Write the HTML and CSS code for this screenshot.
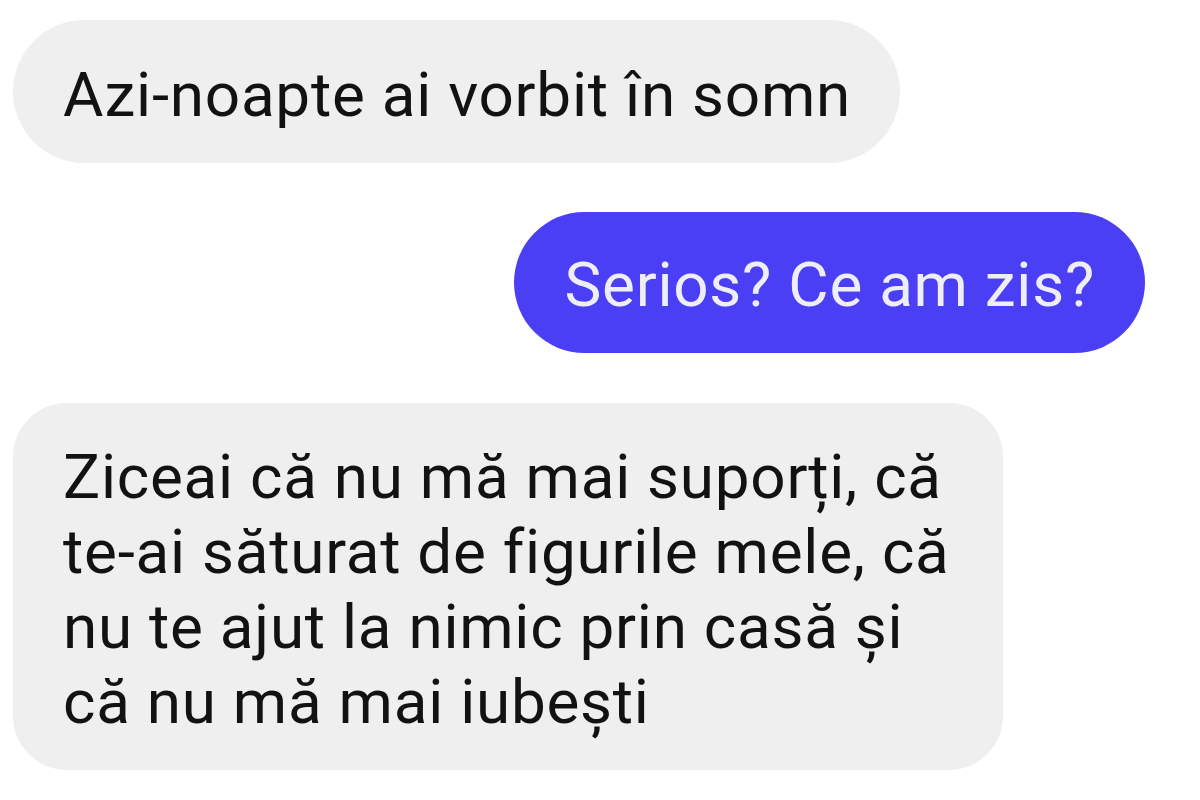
FILE: index.html
```html
<!DOCTYPE html>
<html lang="ro">
<head>
<meta charset="utf-8">
<link rel="stylesheet" href="styles.css">
</head>
<body>
<div class="chat">
  <div class="row row-in">
    <div class="bubble in single">Azi-noapte ai vorbit în somn</div>
  </div>
  <div class="row row-out">
    <div class="bubble out single">Serios? Ce am zis?</div>
  </div>
  <div class="row row-in">
    <div class="bubble in multi">Ziceai că nu mă mai suporți, că<br>te-ai săturat de figurile mele, că<br>nu te ajut la nimic prin casă și<br>că nu mă mai iubești</div>
  </div>
</div>
</body>
</html>
```

FILE: styles.css
```css
html, body {
  margin: 0;
  padding: 0;
  background: #ffffff;
}
body {
  width: 1200px;
  height: 800px;
  overflow: hidden;
  font-family: Roboto, "Liberation Sans", sans-serif;
}
.chat {
  display: flex;
  flex-direction: column;
  padding: 20px 55px 0 13px;
  gap: 49px;
}
.row {
  display: flex;
}
.row-in { justify-content: flex-start; }
.row-out { justify-content: flex-end; margin-bottom: 1px; }
.bubble {
  box-sizing: border-box;
  font-size: 62px;
  letter-spacing: 0.75px;
}
.single {
  height: 143px;
  border-radius: 72px;
  white-space: nowrap;
  padding: 38px 49px 0 50px;
}
.in {
  background: #efefef;
  color: #121212;
}
.out {
  background: #4a3ff4;
  color: #eeeef8;
}
.row-out .single {
  height: 141px;
  padding: 36px 50px 0 50px;
}
.multi {
  width: 990px;
  padding: 36px 40px 31px 50px;
  border-radius: 54px;
  line-height: 75px;
}
```
